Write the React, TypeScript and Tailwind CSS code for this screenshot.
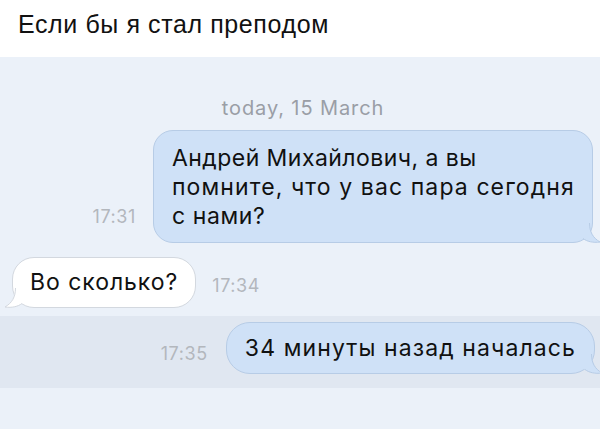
import React from "react"

const TailRight = ({ fill, stroke }: { fill: string; stroke: string }) => (
    <svg className="absolute -right-[9px] -bottom-[1px]" width="20" height="20" viewBox="0 0 20 20">
        <path d="M0 0 L9 0 C9 9 12 15 19 19 C12 20 6 18.5 2 15.5 L0 14 Z" fill={fill} />
        <path d="M8.5 0 C8.5 9 12 15 19 19 C12 20 6 18.5 2 15.5" fill="none" stroke={stroke} strokeWidth="1" />
    </svg>
)

const TailLeft = ({ fill, stroke }: { fill: string; stroke: string }) => (
    <svg className="absolute -left-[9px] -bottom-[1px]" width="20" height="20" viewBox="0 0 20 20">
        <path d="M20 0 L11 0 C11 9 8 15 1 19 C8 20 14 18.5 18 15.5 L20 14 Z" fill={fill} />
        <path d="M11.5 0 C11.5 9 8 15 1 19 C8 20 14 18.5 18 15.5" fill="none" stroke={stroke} strokeWidth="1" />
    </svg>
)

const Time = ({ children }: { children: React.ReactNode }) => (
    <span className="text-[18px] leading-[20px] tracking-[0.6px] text-[#b3b7bd]">{children}</span>
)

const App = () => {
    return (
        <div className="w-[600px] h-[429px] overflow-hidden bg-[#ebf1f9] font-['Inter',sans-serif] text-[#111]">
            <div className="h-[57px] bg-white pl-[18px] pt-[11px]">
                <h1 className="font-['Liberation_Sans',Arial,sans-serif] text-[25px] leading-[26px] tracking-[0.6px] text-[#111]">
                    Если бы я стал преподом
                </h1>
            </div>

            <div className="mt-[39px] pl-[6px] text-center text-[20px] leading-[24px] tracking-[0.9px] text-[#9a9ea6]">
                today, 15 March
            </div>

            {/* first message */}
            <div className="mt-[10px] flex items-end justify-end gap-[17px] pr-[7px]">
                <div className="mb-[14px]">
                    <Time>17:31</Time>
                </div>
                <div className="relative flex w-[440px] flex-col rounded-[20px] border border-[#b7cce6] bg-[#cfe1f7] pl-[18px] pt-[13px] pb-[11px] text-[23px] leading-[29px]">
                    <span className="tracking-[0.45px]">Андрей Михайлович, а вы</span>
                    <span className="tracking-[1.1px]">помните, что у вас пара сегодня</span>
                    <span className="tracking-[0.6px]">с нами?</span>
                    <TailRight fill="#cfe1f7" stroke="#b7cce6" />
                </div>
            </div>

            {/* reply */}
            <div className="mt-[14px] flex items-center gap-[16px] pl-[12px]">
                <div className="relative rounded-[22px] border border-[#d3d8df] bg-white px-[17px] py-[10px] text-[23px] leading-[29px] tracking-[0.95px]">
                    Во сколько?
                    <TailLeft fill="#ffffff" stroke="#d3d8df" />
                </div>
                <div className="mt-[6px]">
                    <Time>17:34</Time>
                </div>
            </div>

            {/* highlighted row */}
            <div className="mt-[8px] flex h-[72px] items-start justify-end gap-[18px] bg-[#e0e7f1] pr-[5px] pt-[6px]">
                <div className="mt-[20px]">
                    <Time>17:35</Time>
                </div>
                <div className="relative rounded-[24px] border border-[#b7cce6] bg-[#cfe1f7] px-[18px] py-[10px] text-[23px] leading-[30px] tracking-[1.1px]">
                    34 минуты назад началась
                    <TailRight fill="#cfe1f7" stroke="#b7cce6" />
                </div>
            </div>
        </div>
    )
}

export default App
